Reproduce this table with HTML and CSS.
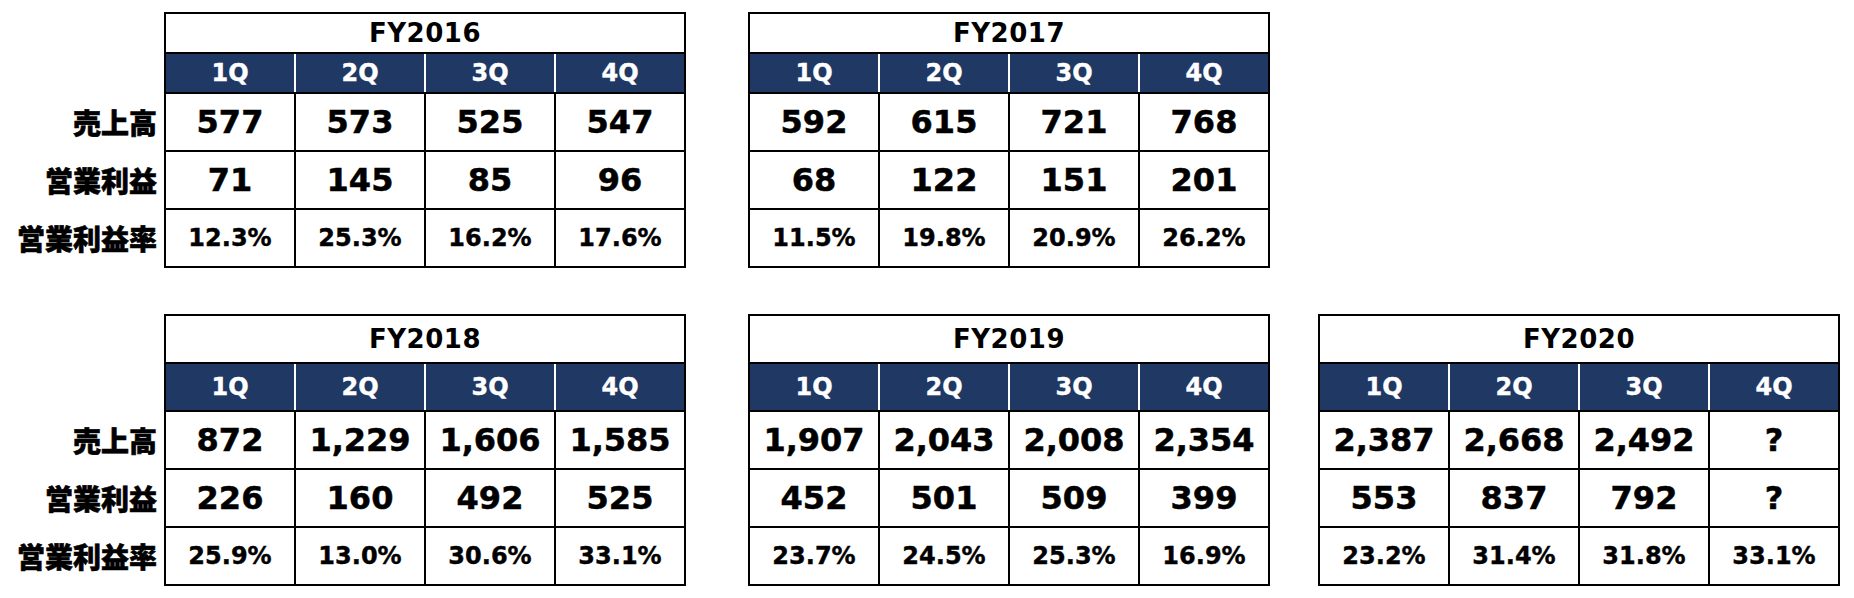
FILE: index.html
```html
<!DOCTYPE html>
<html lang="ja">
<head>
<meta charset="utf-8">
<title>業績推移</title>
<link rel="stylesheet" href="styles.css">
</head>
<body>
<main class="page">
  <section class="block">
    <div class="labels">
      <div class="label">売上高</div>
      <div class="label">営業利益</div>
      <div class="label">営業利益率</div>
    </div>
    <div class="fy">
      <div class="fy-title">FY2016</div>
      <div class="fy-head"><div class="q">1Q</div><div class="q">2Q</div><div class="q">3Q</div><div class="q">4Q</div></div>
      <div class="cell">577</div><div class="cell">573</div><div class="cell">525</div><div class="cell">547</div>
      <div class="cell">71</div><div class="cell">145</div><div class="cell">85</div><div class="cell">96</div>
      <div class="cell pct">12.3%</div><div class="cell pct">25.3%</div><div class="cell pct">16.2%</div><div class="cell pct">17.6%</div>
    </div>
    <div class="fy gap-wide">
      <div class="fy-title">FY2017</div>
      <div class="fy-head"><div class="q">1Q</div><div class="q">2Q</div><div class="q">3Q</div><div class="q">4Q</div></div>
      <div class="cell">592</div><div class="cell">615</div><div class="cell">721</div><div class="cell">768</div>
      <div class="cell">68</div><div class="cell">122</div><div class="cell">151</div><div class="cell">201</div>
      <div class="cell pct">11.5%</div><div class="cell pct">19.8%</div><div class="cell pct">20.9%</div><div class="cell pct">26.2%</div>
    </div>
  </section>
  <section class="block block--tall">
    <div class="labels">
      <div class="label">売上高</div>
      <div class="label">営業利益</div>
      <div class="label">営業利益率</div>
    </div>
    <div class="fy">
      <div class="fy-title">FY2018</div>
      <div class="fy-head"><div class="q">1Q</div><div class="q">2Q</div><div class="q">3Q</div><div class="q">4Q</div></div>
      <div class="cell">872</div><div class="cell">1,229</div><div class="cell">1,606</div><div class="cell">1,585</div>
      <div class="cell">226</div><div class="cell">160</div><div class="cell">492</div><div class="cell">525</div>
      <div class="cell pct">25.9%</div><div class="cell pct">13.0%</div><div class="cell pct">30.6%</div><div class="cell pct">33.1%</div>
    </div>
    <div class="fy gap-wide">
      <div class="fy-title">FY2019</div>
      <div class="fy-head"><div class="q">1Q</div><div class="q">2Q</div><div class="q">3Q</div><div class="q">4Q</div></div>
      <div class="cell">1,907</div><div class="cell">2,043</div><div class="cell">2,008</div><div class="cell">2,354</div>
      <div class="cell">452</div><div class="cell">501</div><div class="cell">509</div><div class="cell">399</div>
      <div class="cell pct">23.7%</div><div class="cell pct">24.5%</div><div class="cell pct">25.3%</div><div class="cell pct">16.9%</div>
    </div>
    <div class="fy gap-narrow">
      <div class="fy-title">FY2020</div>
      <div class="fy-head"><div class="q">1Q</div><div class="q">2Q</div><div class="q">3Q</div><div class="q">4Q</div></div>
      <div class="cell">2,387</div><div class="cell">2,668</div><div class="cell">2,492</div><div class="cell">?</div>
      <div class="cell">553</div><div class="cell">837</div><div class="cell">792</div><div class="cell">?</div>
      <div class="cell pct">23.2%</div><div class="cell pct">31.4%</div><div class="cell pct">31.8%</div><div class="cell pct">33.1%</div>
    </div>
  </section>
</main>
</body>
</html>
```
FILE: styles.css
```css
html, body {
  margin: 0;
  padding: 0;
  background: #ffffff;
}

body {
  font-family: "DejaVu Sans", "Noto Sans CJK JP", sans-serif;
  font-weight: bold;
  color: #000000;
}

.page {
  padding-top: 12px;
  display: flex;
  flex-direction: column;
  gap: 46px;
}

.block {
  display: flex;
  align-items: flex-start;
}

.labels {
  width: 164px;
  box-sizing: border-box;
  padding-right: 7px;
  padding-top: 82px;
  display: flex;
  flex-direction: column;
  gap: 2px;
  text-align: right;
}

.block--tall .labels {
  padding-top: 98px;
}

.label {
  height: 56px;
  line-height: 56px;
  font-family: "Noto Sans CJK JP", sans-serif;
  font-weight: 900;
  font-size: 28px;
  -webkit-text-stroke: 0.6px #000000;
  white-space: nowrap;
}

.fy {
  display: grid;
  grid-template-columns: repeat(4, 128px);
  grid-template-rows: 38px 38px repeat(3, 56px);
  gap: 2px;
  background: #000000;
  border: 2px solid #000000;
}

.block--tall .fy {
  grid-template-rows: 46px 46px repeat(3, 56px);
}

.gap-wide {
  margin-left: 62px;
}

.gap-narrow {
  margin-left: 48px;
}

.fy-title {
  grid-column: 1 / -1;
  background: #ffffff;
  display: flex;
  align-items: center;
  justify-content: center;
  font-size: 26px;
  letter-spacing: 0.5px;
}

.fy-head {
  grid-column: 1 / -1;
  display: grid;
  grid-template-columns: repeat(4, 128px);
  gap: 2px;
  background: #ffffff;
}

.q {
  background: #1f3864;
  color: #ffffff;
  font-size: 24px;
  -webkit-text-stroke: 0.4px #ffffff;
  display: flex;
  align-items: center;
  justify-content: center;
}

.cell {
  background: #ffffff;
  font-size: 32px;
  -webkit-text-stroke: 0.5px #000000;
  display: flex;
  align-items: center;
  justify-content: center;
  white-space: nowrap;
}

.cell.pct {
  font-size: 24px;
  -webkit-text-stroke: 0.4px #000000;
}
```
